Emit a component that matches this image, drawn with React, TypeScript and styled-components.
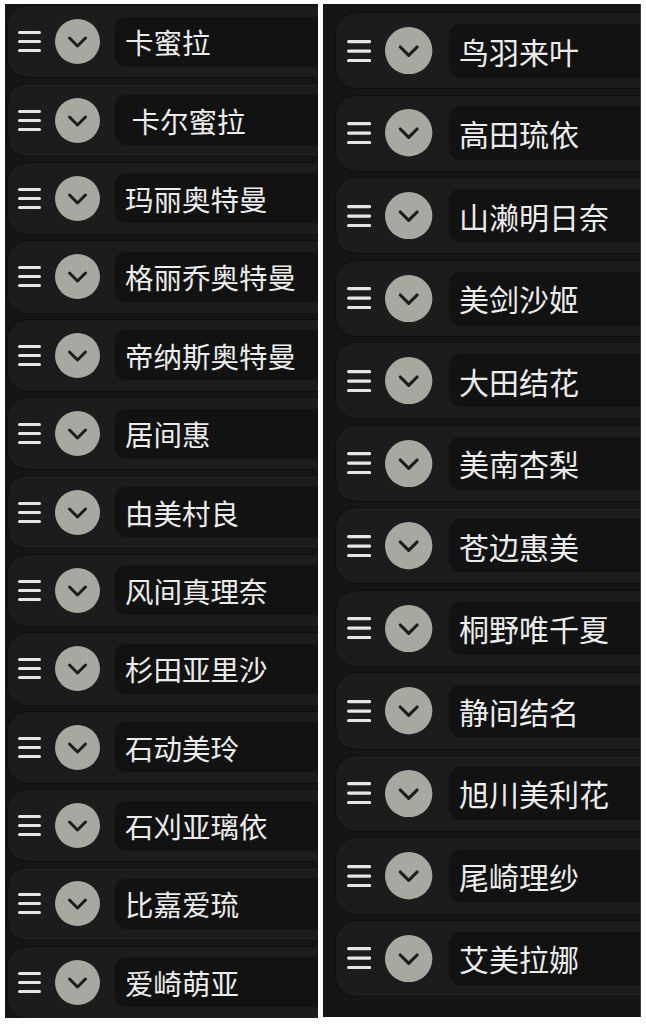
import React from "react";
import styled, { createGlobalStyle } from "styled-components";

const GlobalStyle = createGlobalStyle`
  html, body {
    margin: 0;
    padding: 0;
    background: #ffffff;
  }
  body {
    font-family: "Noto Sans CJK SC", "Noto Sans", sans-serif;
  }
`;

const Page = styled.div`
  display: flex;
  gap: 5px;
  width: 646px;
  height: 1024px;
  box-sizing: border-box;
  padding: 4px 0 0 5px;
`;

const Panel = styled.div<{ $k: number; $width: number; $height: number; $pad: string; $edge?: boolean }>`
  --k: ${(p) => p.$k};
  flex: none;
  width: ${(p) => p.$width}px;
  height: ${(p) => p.$height}px;
  box-sizing: border-box;
  padding: ${(p) => p.$pad};
  background: #151515;
  border-right: ${(p) => (p.$edge ? "1px solid #3c3c3c" : "none")};
  overflow: hidden;
  display: flex;
  flex-direction: column;
  gap: calc(5px * var(--k));
`;

const Row = styled.div`
  flex: none;
  display: flex;
  align-items: center;
  gap: calc(14px * var(--k));
  width: 380px;
  height: calc(73.4px * var(--k));
  box-sizing: border-box;
  padding-left: calc(10px * var(--k));
  background: #1c1c1c;
  border: 1px solid #0f0f0f;
  border-radius: calc(20px * var(--k));
`;

const Handle = styled.svg`
  flex: none;
  width: calc(23px * var(--k));
  height: calc(21px * var(--k));
`;

const Toggle = styled.svg`
  flex: none;
  width: calc(45px * var(--k));
  height: calc(45px * var(--k));
`;

const NameField = styled.input`
  flex: none;
  width: 300px;
  height: calc(52px * var(--k));
  box-sizing: border-box;
  margin: 0;
  padding: 0 0 0 calc(10px * var(--k));
  background: #121212;
  border: 1px solid #1a1a1a;
  border-radius: calc(12px * var(--k));
  color: #ececec;
  font-family: "Noto Sans CJK SC", "Noto Sans", sans-serif;
  font-size: calc(28.5px * var(--k));
  font-weight: 400;
  outline: none;
`;

const left = [
  "卡蜜拉",
  " 卡尔蜜拉",
  "玛丽奥特曼",
  "格丽乔奥特曼",
  "帝纳斯奥特曼",
  "居间惠",
  "由美村良",
  "风间真理奈",
  "杉田亚里沙",
  "石动美玲",
  "石刈亚璃依",
  "比嘉爱琉",
  "爱崎萌亚",
];

const right = [
  "鸟羽来叶",
  "高田琉依",
  "山濑明日奈",
  "美剑沙姬",
  "大田结花",
  "美南杏梨",
  "苍边惠美",
  "桐野唯千夏",
  "静间结名",
  "旭川美利花",
  "尾崎理纱",
  "艾美拉娜",
];

const NameRow = ({ name }: { name: string }) => (
  <Row>
    <Handle viewBox="0 0 23 21">
      <g stroke="#e6e6e6" strokeWidth="3" strokeLinecap="round">
        <line x1="1.5" y1="1.5" x2="21.5" y2="1.5" />
        <line x1="1.5" y1="10.5" x2="21.5" y2="10.5" />
        <line x1="1.5" y1="19.5" x2="21.5" y2="19.5" />
      </g>
    </Handle>
    <Toggle viewBox="0 0 45 45">
      <circle cx="22.5" cy="22.5" r="22.5" fill="#a8a7a0" />
      <polyline
        points="14.5,19 22.5,27 30.5,19"
        fill="none"
        stroke="#1c1c1c"
        strokeWidth="3"
        strokeLinecap="round"
        strokeLinejoin="round"
      />
    </Toggle>
    <NameField readOnly value={name} />
  </Row>
);

const App = (): JSX.Element => {
  return (
    <React.Fragment>
      <GlobalStyle />
      <Page>
        <Panel $k={1} $width={313} $height={1014} $pad="1px 0 0 2px">
          {left.map((name) => (
            <NameRow key={name} name={name} />
          ))}
        </Panel>
        <Panel $k={1.053} $width={318} $height={1013} $pad="8px 0 0 12px" $edge>
          {right.map((name) => (
            <NameRow key={name} name={name} />
          ))}
        </Panel>
      </Page>
    </React.Fragment>
  );
};

export default App;
